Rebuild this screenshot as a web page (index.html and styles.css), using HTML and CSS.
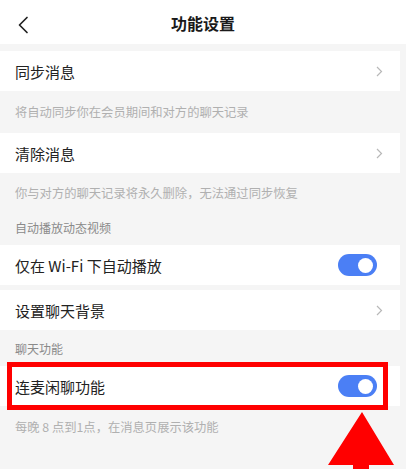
FILE: index.html
```html
<!DOCTYPE html>
<html lang="zh">
<head>
<meta charset="utf-8">
<link rel="stylesheet" href="styles.css">
</head>
<body>
<div class="page">
  <header class="header">
    <svg class="back" width="12" height="18" viewBox="0 0 12 18"><path d="M10 1.5 L2.5 9 L10 16.5" fill="none" stroke="#222" stroke-width="1.7" stroke-linecap="round" stroke-linejoin="round"/></svg>
    <div class="title">功能设置</div>
  </header>

  <div class="row first">
    <span class="label">同步消息</span>
    <svg class="chev" width="7" height="11" viewBox="0 0 7 11"><path d="M1 1 L5.5 5.5 L1 10" fill="none" stroke="#b8b8b8" stroke-width="1.2"/></svg>
  </div>
  <div class="desc d1">将自动同步你在会员期间和对方的聊天记录</div>

  <div class="row">
    <span class="label">清除消息</span>
    <svg class="chev" width="7" height="11" viewBox="0 0 7 11"><path d="M1 1 L5.5 5.5 L1 10" fill="none" stroke="#b8b8b8" stroke-width="1.2"/></svg>
  </div>
  <div class="desc d2">你与对方的聊天记录将永久删除，无法通过同步恢复</div>
  <div class="section s1">自动播放动态视频</div>

  <div class="row">
    <span class="label">仅在 Wi-Fi 下自动播放</span>
    <span class="toggle"><span class="knob"></span></span>
  </div>
  <div class="row gap">
    <span class="label">设置聊天背景</span>
    <svg class="chev" width="7" height="11" viewBox="0 0 7 11"><path d="M1 1 L5.5 5.5 L1 10" fill="none" stroke="#b8b8b8" stroke-width="1.2"/></svg>
  </div>
  <div class="section s2">聊天功能</div>

  <div class="row highlight">
    <span class="label">连麦闲聊功能</span>
    <span class="toggle"><span class="knob"></span></span>
    <div class="redbox"></div>
  </div>
  <div class="desc d3">每晚 8 点到1点，在消息页展示该功能</div>

  <svg class="arrow" width="66" height="58" viewBox="0 0 66 58"><polygon points="34,0 66,53 41,53 41,58 25,58 25,53 0,53" fill="#f00"/></svg>
</div>
</body>
</html>
```
FILE: styles.css
```css
* { box-sizing: border-box; }
html, body { margin: 0; padding: 0; }
body {
  background: #f5f5f5;
  font-family: "Noto Sans CJK SC", "Noto Sans", sans-serif;
  width: 406px;
  height: 469px;
  overflow: hidden;
}
.page {
  position: relative;
  display: flex;
  flex-direction: column;
  height: 469px;
}
.header {
  height: 44px;
  background: #fff;
  display: flex;
  align-items: center;
  justify-content: center;
  position: relative;
}
.back {
  position: absolute;
  left: 17px;
  top: 16px;
}
.title {
  font-size: 16px;
  font-weight: 700;
  color: #1a1a1a;
  margin-top: 2px;
}
.row {
  width: 400px;
  height: 40px;
  background: #fff;
  display: flex;
  align-items: center;
  justify-content: space-between;
  padding: 0 19px 0 15px;
  position: relative;
}
.row.first { margin-top: 7px; }
.row.gap { margin-top: 5px; }
.label {
  font-size: 15px;
  color: #222;
}
.chev { margin-right: -2px; margin-top: 1px; }
.desc, .section {
  display: flex;
  align-items: center;
  padding-left: 15px;
  font-size: 12.3px;
  color: #b0b0b0;
}
.section { color: #8a8a8a; font-size: 12px; }
.d1 { height: 42px; }
.d2 { height: 37px; padding-top: 2px; }
.s1 { height: 35px; }
.s2 { height: 36px; }
.d3 { height: 42px; }
.toggle {
  width: 39px;
  height: 22px;
  border-radius: 11px;
  background: #4b7ff5;
  display: flex;
  align-items: center;
  justify-content: flex-end;
  padding-right: 4px;
  margin-right: 4px;
}
.knob {
  width: 15px;
  height: 15px;
  border-radius: 50%;
  background: #fff;
}
.redbox {
  position: absolute;
  left: 7px;
  top: -4px;
  width: 381px;
  height: 48px;
  border: 5px solid #f00;
}
.arrow {
  position: absolute;
  left: 328px;
  top: 412px;
}
```
